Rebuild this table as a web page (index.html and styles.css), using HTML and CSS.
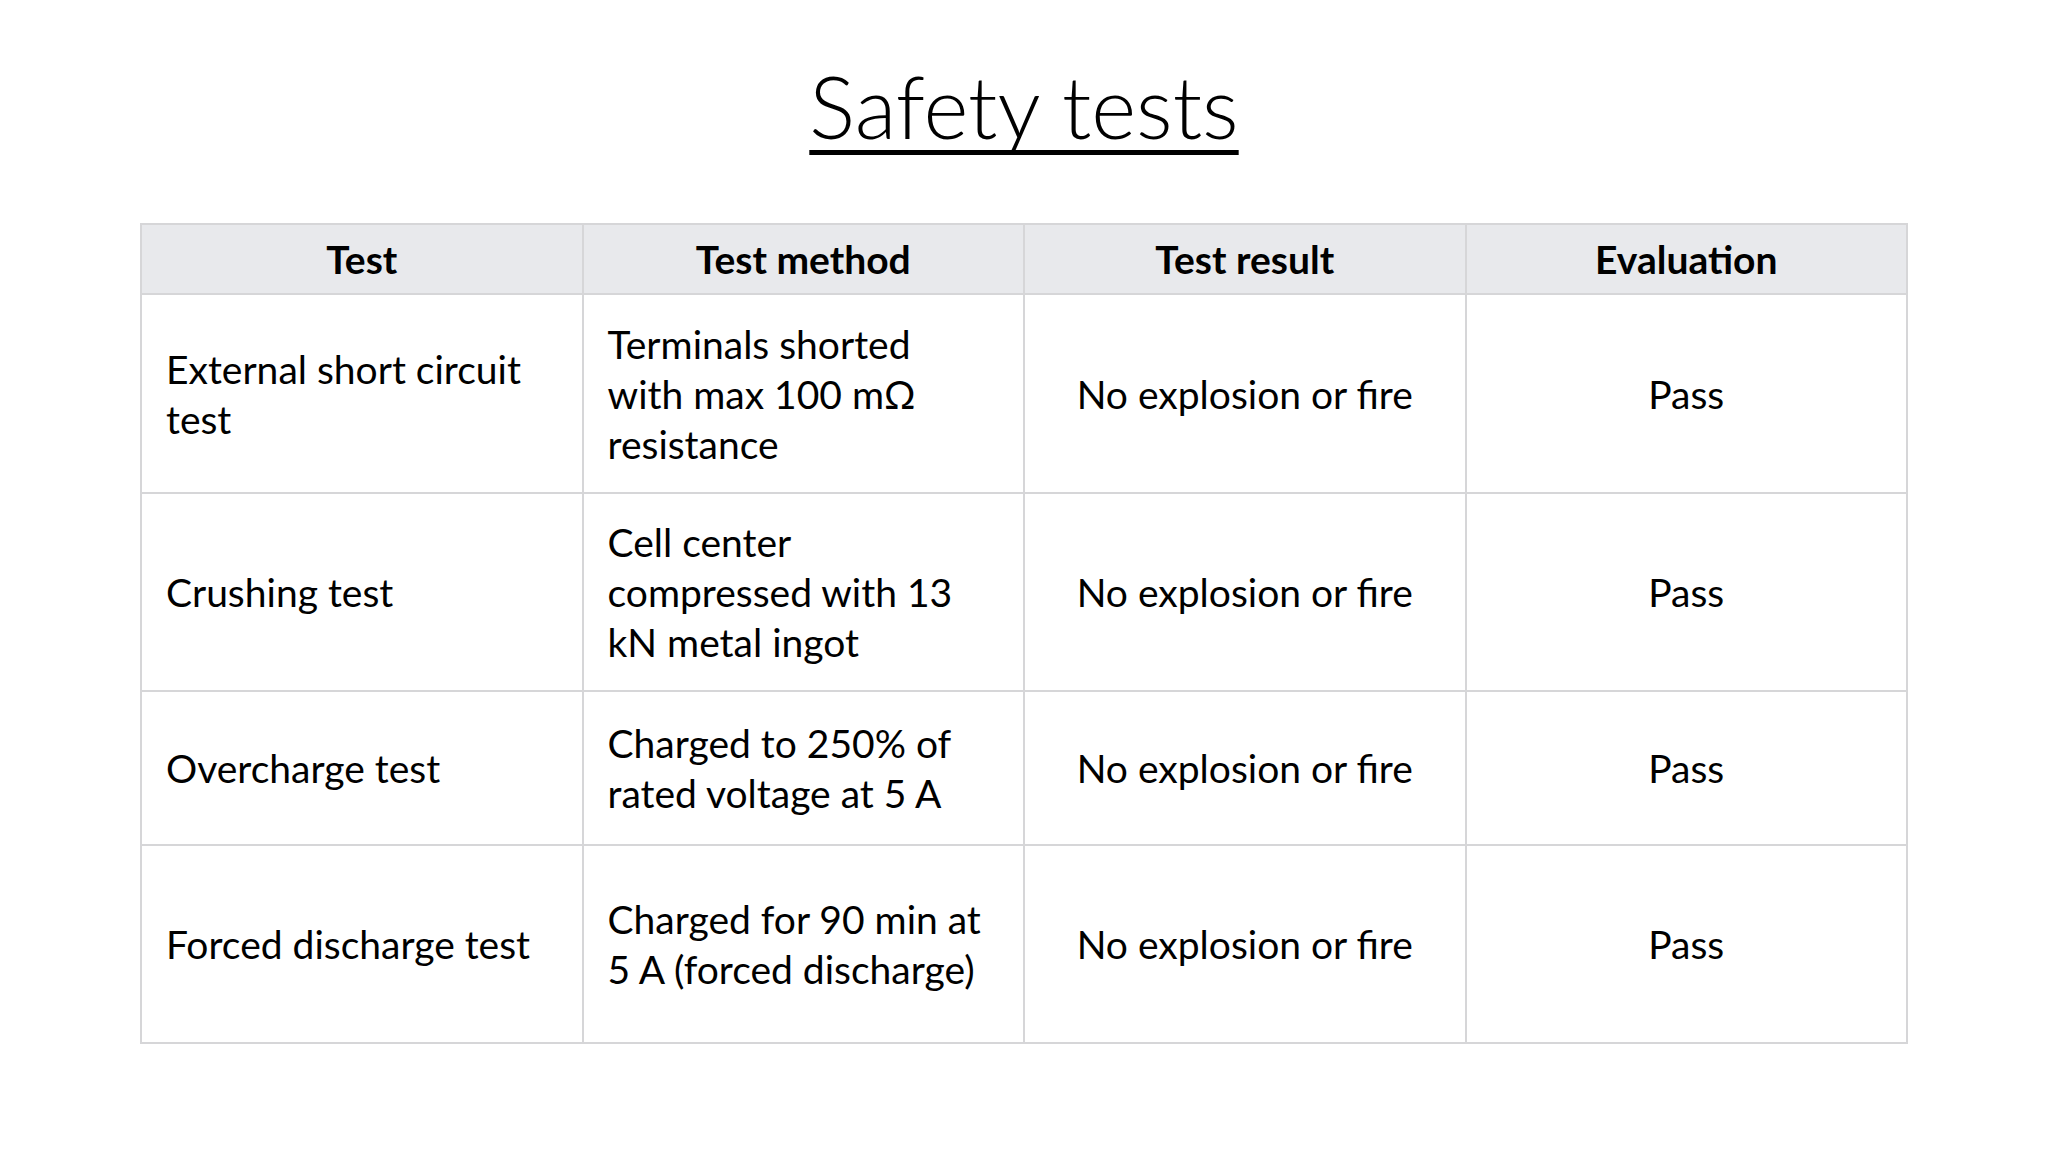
FILE: index.html
```html
<!DOCTYPE html>
<html>
<head>
<meta charset="utf-8">
<link rel="stylesheet" href="styles.css">
</head>
<body>
<div class="slide">
  <h1 class="title"><span class="title-text">Safety tests</span></h1>
  <table class="tests">
    <colgroup><col><col><col><col></colgroup>
    <thead>
      <tr class="row-head">
        <th>Test</th><th>Test method</th><th>Test result</th><th>Evaluation</th>
      </tr>
    </thead>
    <tbody>
      <tr class="row-a">
        <td class="left">External short circuit test</td>
        <td class="left">Terminals shorted with max 100 mΩ resistance</td>
        <td class="center">No explosion or fire</td>
        <td class="center">Pass</td>
      </tr>
      <tr class="row-b">
        <td class="left">Crushing test</td>
        <td class="left">Cell center compressed with 13 kN metal ingot</td>
        <td class="center">No explosion or fire</td>
        <td class="center">Pass</td>
      </tr>
      <tr class="row-c">
        <td class="left">Overcharge test</td>
        <td class="left">Charged to 250% of rated voltage at 5 A</td>
        <td class="center">No explosion or fire</td>
        <td class="center">Pass</td>
      </tr>
      <tr class="row-d">
        <td class="left">Forced discharge test</td>
        <td class="left">Charged for 90 min at 5 A (forced discharge)</td>
        <td class="center">No explosion or fire</td>
        <td class="center">Pass</td>
      </tr>
    </tbody>
  </table>
</div>
</body>
</html>
```
FILE: styles.css
```css
html, body {
  margin: 0;
  padding: 0;
  background: #ffffff;
}
.slide {
  width: 2048px;
  height: 1152px;
  box-sizing: border-box;
  padding: 0 140px 0 140px;
  display: flex;
  flex-direction: column;
  align-items: stretch;
  font-family: Lato, "Liberation Sans", sans-serif;
  color: #000;
}
.title {
  margin: 0;
  padding-top: 56px;
  height: 223px;
  box-sizing: border-box;
  text-align: center;
  font-weight: 300;
  font-size: 86px;
  line-height: 100px;
}
.title-text {
  text-decoration: underline;
  text-decoration-thickness: 5px;
  text-underline-offset: 11px;
  text-decoration-skip-ink: none;
}
.tests {
  width: 1768px;
  border-collapse: collapse;
  table-layout: fixed;
  font-size: 39px;
  line-height: 50px;
}
.tests th, .tests td {
  border: 2px solid #d6d6d8;
  padding: 0 36px 0 24px;
  vertical-align: middle;
}
.tests th {
  background: #e8e9ec;
  font-weight: 700;
  text-align: center;
  padding: 0 24px;
}
.tests td.center {
  padding: 0 24px;
}
.row-head { height: 70px; }
.row-a { height: 199px; }
.row-b { height: 198px; }
.row-c { height: 154px; }
.row-d { height: 198px; }
.left { text-align: left; }
.center { text-align: center; }
```
